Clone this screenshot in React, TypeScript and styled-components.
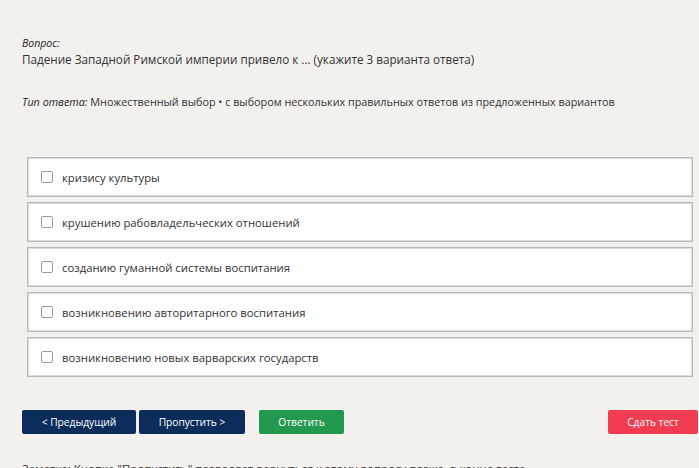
import styled, { createGlobalStyle } from 'styled-components';

const Global = createGlobalStyle`
  html, body {
    margin: 0;
    padding: 0;
    background: #f2f1ee;
    font-family: 'Open Sans', 'Noto Sans', sans-serif;
    color: #333;
    overflow: hidden;
  }
`;

const Page = styled.div`
  padding: 36px 1px 0 22px;
`;

const Label = styled.div`
  font-style: italic;
  font-size: 10.5px;
  line-height: 14px;
  color: #222;
`;

const Question = styled.div`
  font-size: 11.7px;
  line-height: 18px;
  color: #333;
`;

const TypeLine = styled.div`
  margin-top: 27px;
  font-size: 10.8px;
  line-height: 14px;
  color: #333;
  & em {
    color: #222;
  }
`;

const Options = styled.div`
  margin: 48px 5px 0 5px;
  display: flex;
  flex-direction: column;
  gap: 5px;
`;

const Option = styled.label`
  display: flex;
  align-items: center;
  gap: 9px;
  height: 38px;
  padding: 0 13px;
  background: #fff;
  border: 1px solid #b9b9b9;
  box-shadow: inset 0 0 0 1px #dcdcdc;
  font-size: 11.3px;
  color: #333;
`;

const Box = styled.span`
  width: 10px;
  height: 10px;
  border: 1px solid #9a9a9a;
  border-radius: 2px;
  background: #fff;
`;

const Actions = styled.div`
  margin-top: 33px;
  display: flex;
  align-items: center;
`;

const Button = styled.button<{ $bg: string; $w: number; $ml?: number }>`
  width: ${p => p.$w}px;
  height: 24px;
  margin-left: ${p => p.$ml ?? 0}px;
  border: none;
  border-radius: 2px;
  background: ${p => p.$bg};
  color: #fff;
  font-family: inherit;
  font-size: 10.2px;
  padding: 0;
`;

const Spacer = styled.div`
  flex: 1;
`;

const Note = styled.div`
  margin-top: 28px;
  font-size: 11.5px;
  line-height: 14px;
  color: #333;
  white-space: nowrap;
`;

const answers = [
  'кризису культуры',
  'крушению рабовладельческих отношений',
  'созданию гуманной системы воспитания',
  'возникновению авторитарного воспитания',
  'возникновению новых варварских государств',
];

export default function App() {
  return (
    <Page>
      <Global />
      <Label>Вопрос:</Label>
      <Question>Падение Западной Римской империи привело к ... (укажите 3 варианта ответа)</Question>
      <TypeLine>
        <em>Тип ответа:</em> Множественный выбор • с выбором нескольких правильных ответов из предложенных вариантов
      </TypeLine>
      <Options>
        {answers.map(a => (
          <Option key={a}>
            <Box />
            {a}
          </Option>
        ))}
      </Options>
      <Actions>
        <Button $bg="#0c2d5c" $w={114}>&lt; Предыдущий</Button>
        <Button $bg="#0c2d5c" $w={106} $ml={3}>Пропустить &gt;</Button>
        <Button $bg="#23994f" $w={85} $ml={14}>Ответить</Button>
        <Spacer />
        <Button $bg="#f23c51" $w={90}>Сдать тест</Button>
      </Actions>
      <Note>Заметка: Кнопка "Пропустить" позволяет вернуться к этому вопросу позже, в конце теста.</Note>
    </Page>
  );
}
